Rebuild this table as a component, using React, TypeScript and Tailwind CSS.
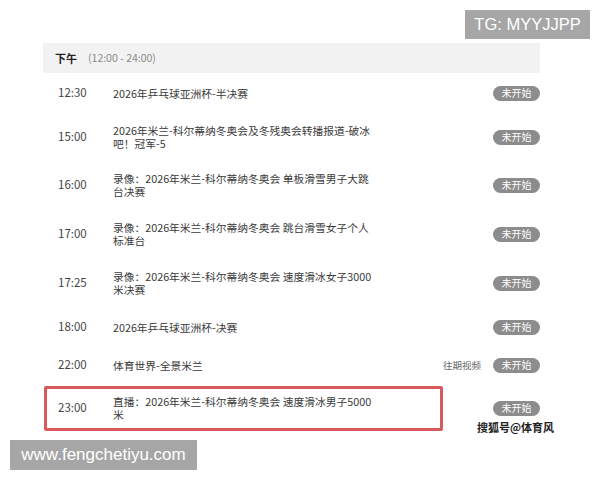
const rows = [
  { time: "12:30", title: "2026年乒乓球亚洲杯-半决赛", h: "h-[40px]" },
  { time: "15:00", title: "2026年米兰-科尔蒂纳冬奥会及冬残奥会转播报道-破冰吧！冠军-5", h: "h-[48px]" },
  { time: "16:00", title: "录像：2026年米兰-科尔蒂纳冬奥会 单板滑雪男子大跳台决赛", h: "h-[48px]" },
  { time: "17:00", title: "录像：2026年米兰-科尔蒂纳冬奥会 跳台滑雪女子个人标准台", h: "h-[50px]" },
  { time: "17:25", title: "录像：2026年米兰-科尔蒂纳冬奥会 速度滑冰女子3000米决赛", h: "h-[48px]" },
  { time: "18:00", title: "2026年乒乓球亚洲杯-决赛", h: "h-[40px]" },
  { time: "22:00", title: "体育世界-全景米兰", h: "h-[36px]", replay: true },
];

function Badge() {
  return (
    <span className="flex h-[15px] w-[47px] items-center justify-center rounded-full bg-[#8c8c8c] text-[10px] leading-none text-white">
      未开始
    </span>
  );
}

export default function App() {
  return (
    <div
      className="relative h-[480px] w-[600px] overflow-hidden bg-white text-[#3a3a3a]"
      style={{ fontFamily: '"Noto Sans CJK SC", "Noto Sans", sans-serif' }}
    >
      {/* 节目单 */}
      <div className="ml-[43px] w-[497px] pt-[43px]">
        <div className="flex h-[30px] items-center bg-[#f2f2f2] pl-[12px]">
          <span className="w-[33px] text-[11px] font-bold text-[#222]">下午</span>
          <span className="text-[10.5px] text-[#8a8a8a]">(12:00 - 24:00)</span>
        </div>

        {rows.map((r) => (
          <div key={r.time} className={`flex items-center ${r.h}`}>
            <span className="w-[70px] shrink-0 pl-[15px] text-[11.5px] text-[#444]">{r.time}</span>
            <span className="w-[262px] text-[10.75px] leading-[13px]">{r.title}</span>
            <div className="ml-auto flex items-center gap-[12px]">
              {r.replay && <span className="text-[9.5px] text-[#666]">往期视频</span>}
              <Badge />
            </div>
          </div>
        ))}

        {/* 高亮的直播 */}
        <div className="flex h-[50px] items-center">
          <div className="ml-[1px] flex h-[45px] w-[399px] items-center rounded-[2px] border-[3px] border-[#d85a5a]">
            <span className="w-[66px] shrink-0 pl-[11px] text-[11.5px] text-[#444]">23:00</span>
            <span className="w-[262px] text-[10.75px] leading-[13px]">直播：2026年米兰-科尔蒂纳冬奥会 速度滑冰男子5000米</span>
          </div>
          <div className="ml-auto">
            <Badge />
          </div>
        </div>
      </div>

      {/* 水印 */}
      <div
        className="absolute right-[10px] top-[10px] flex h-[29px] w-[125px] items-center justify-center bg-[#a6a6a6] text-[16.5px] text-white"
        style={{ fontFamily: '"Liberation Sans", Arial, sans-serif' }}
      >
        TG: MYYJJPP
      </div>
      <div className="absolute left-[477px] top-[419px] text-[11px] font-bold text-[#222]">搜狐号@体育风</div>
      <div
        className="absolute left-[10px] top-[440px] flex h-[30px] w-[187px] items-center justify-center bg-[#a6a6a6] text-[17px] text-white"
        style={{ fontFamily: '"Liberation Sans", Arial, sans-serif' }}
      >
        www.fengchetiyu.com
      </div>
    </div>
  );
}
